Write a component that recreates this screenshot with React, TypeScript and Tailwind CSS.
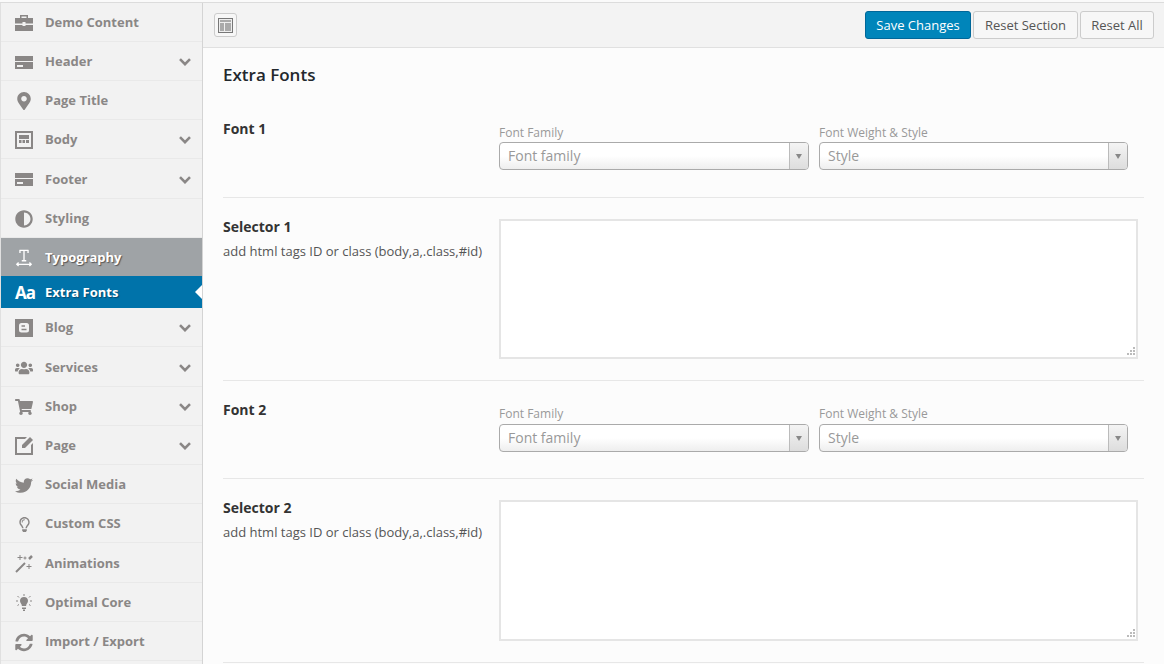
import { FaMapMarkerAlt, FaAdjust, FaUsers, FaShoppingCart, FaTwitter, FaRegLightbulb, FaSyncAlt } from "react-icons/fa";
import type { ReactNode } from "react";

const BriefcaseIcon = () => (
  <svg viewBox="0 0 18 16" className="h-[16px] w-[18px]">
    <path fill="#8a8786" d="M5 0h8v3h-1.500V1.500h-5V3H5zM0 3h18v5.500h-7.500V7h-3v1.500H0zM0 10h7.500v1h3v-1H18v6H0z" />
  </svg>
);

const HeaderIcon = () => (
  <svg viewBox="0 0 18 13" className="h-[13px] w-[18px]">
    <path fill="#8a8786" d="M0 0h18v5H0zM0 6h18v7H0z" />
    <path fill="#f2f2f2" d="M2 9h6v2H2z" />
  </svg>
);

const BodyIcon = () => (
  <svg viewBox="0 0 18 18" className="h-[18px] w-[18px]">
    <path fill="#8a8786" d="M0 0h18v18H0z" />
    <path fill="#f2f2f2" d="M2 2h14v14H2z" />
    <path fill="#8a8786" d="M4 4h10v4H4zM4 9h2.500v3H4zM7.500 9H10v3H7.500zM11 9h3v3h-3z" />
  </svg>
);

const TypoIcon = () => (
  <svg viewBox="0 0 20 20" className="h-[20px] w-[20px]" fill="none" stroke="#fff">
    <path strokeWidth="1.500" d="M5 1.500h10M5.500 1v3.500M14.500 1v3.500M10 1.500V13M7.500 13h5" />
    <path strokeWidth="1.500" d="M2 17h16M4 15l-2 2 2 2M16 15l2 2-2 2" />
  </svg>
);

const BloggerIcon = () => (
  <svg viewBox="0 0 18 18" className="h-[18px] w-[18px]">
    <path fill="#8a8786" d="M0 0h18v18H0z" />
    <rect x="4" y="4" width="10" height="9.500" rx="2.500" fill="#f2f2f2" />
    <path fill="#8a8786" d="M6.500 6.200h3.500v1.500H6.500zM6.500 9.800h5v1.500h-5z" />
  </svg>
);

const PageIcon = () => (
  <svg viewBox="0 0 18 18" className="h-[18px] w-[18px]">
    <path fill="#8a8786" d="M0 0h12l-2 2H2v14h14V8l2-2v12H0z" />
    <path fill="#8a8786" d="M15 0l3 3-8 8H7V8z" />
  </svg>
);

const WandIcon = () => (
  <svg viewBox="0 0 18 18" className="h-[18px] w-[18px]" fill="none" stroke="#8a8786">
    <path strokeWidth="2" d="M1 17L10 8" />
    <path strokeWidth="2.500" d="M14 4l3-3" />
    <path strokeWidth="1" d="M5 0v5M2.500 2.500h5M10 1.500v3M8.500 3h3M14 9v5M11.500 11.500h5" />
  </svg>
);

const CoreIcon = () => (
  <svg viewBox="0 0 18 18" className="h-[18px] w-[18px]" fill="none" stroke="#8a8786">
    <path fill="#8a8786" stroke="none" d="M9 3c2.500 0 4 1.700 4 3.700 0 1.700-1.200 2.600-1.800 4.300v1H6.800v-1C6.200 9.300 5 8.400 5 6.700 5 4.700 6.500 3 9 3zM7 13.500h4V15H7zM8 15.500h2V17H8z" />
    <path d="M9 0v2M2.500 2l1.500 1.500M15.500 2L14 3.500M1 7h2M15 7h2M2.500 11.500L4 10.500M15.500 11.500L14 10.500" />
  </svg>
);

const Chevron = () => (
  <svg viewBox="0 0 12 8" className="h-[8px] w-[12px]" fill="none" stroke="#8a8786" strokeWidth="2.600">
    <path d="M1 1.200l5 5 5-5" />
  </svg>
);

type Item = { label: string; icon: ReactNode; arrow?: boolean; h: string };

const itemsTop: Item[] = [
  { label: "Demo Content", icon: <BriefcaseIcon />, h: "h-[39px]" },
  { label: "Header", icon: <HeaderIcon />, arrow: true, h: "h-[39px]" },
  { label: "Page Title", icon: <FaMapMarkerAlt size={18} />, h: "h-[39px]" },
  { label: "Body", icon: <BodyIcon />, arrow: true, h: "h-[39px]" },
  { label: "Footer", icon: <HeaderIcon />, arrow: true, h: "h-[40px]" },
  { label: "Styling", icon: <FaAdjust size={18} />, h: "h-[39px]" },
];

const itemsBottom: Item[] = [
  { label: "Blog", icon: <BloggerIcon />, arrow: true, h: "h-[39px]" },
  { label: "Services", icon: <FaUsers size={18} />, arrow: true, h: "h-[40px]" },
  { label: "Shop", icon: <FaShoppingCart size={18} />, arrow: true, h: "h-[39px]" },
  { label: "Page", icon: <PageIcon />, arrow: true, h: "h-[39px]" },
  { label: "Social Media", icon: <FaTwitter size={19} />, h: "h-[39px]" },
  { label: "Custom CSS", icon: <FaRegLightbulb size={15} />, h: "h-[39px]" },
  { label: "Animations", icon: <WandIcon />, h: "h-[40px]" },
  { label: "Optimal Core", icon: <CoreIcon />, h: "h-[39px]" },
  { label: "Import / Export", icon: <FaSyncAlt size={19} />, h: "h-[39px]" },
];

const MenuRow = ({ item }: { item: Item }) => (
  <div className={`flex items-center border-b border-[#e9e9e9] pt-[2px] pl-[14px] pr-[11px] text-[#8a8786] ${item.h}`}>
    <span className="flex w-[18px] shrink-0 justify-center">{item.icon}</span>
    <span className="ml-[12px] flex-1 text-[13px] font-bold">{item.label}</span>
    {item.arrow && <Chevron />}
  </div>
);

const Select = ({ label, placeholder, w, labelH }: { label: string; placeholder: string; w: string; labelH: string }) => (
  <div className={w}>
    <div className={`text-[12px] leading-[18px] text-[#999] ${labelH}`}>{label}</div>
    <div className="flex h-[28px] items-stretch overflow-hidden rounded-[4px] border border-[#aaa] bg-gradient-to-b from-white from-50% to-[#eee]">
      <span className="flex-1 pl-[8px] text-[14px] leading-[26px] text-[#999]">{placeholder}</span>
      <span className="flex w-[19px] items-center justify-center border-l border-[#bbb] bg-gradient-to-b from-[#f4f4f4] to-[#ddd]">
        <span className="mt-[1px] h-0 w-0 border-x-[3.5px] border-t-[5px] border-x-transparent border-t-[#888]" />
      </span>
    </div>
  </div>
);

const FontRow = ({ title, labelH, gap }: { title: string; labelH: string; gap: string }) => (
  <div className="flex h-[98px] border-b border-[#e7e7e7] pt-[18px]">
    <div className="w-[276px] text-[14px] font-bold text-[#333]">{title}</div>
    <div className={`flex gap-[10px] ${gap}`}>
      <Select label="Font Family" placeholder="Font family" w="w-[310px]" labelH={labelH} />
      <Select label="Font Weight & Style" placeholder="Style" w="w-[309px]" labelH={labelH} />
    </div>
  </div>
);

const SelectorRow = ({ title, h, box }: { title: string; h: string; box: string }) => (
  <div className={`flex border-b border-[#e7e7e7] pt-[21px] ${h}`}>
    <div className="w-[276px]">
      <div className="-mt-[2px] text-[14px] font-bold leading-[19px] text-[#333]">{title}</div>
      <div className="mt-[6px] text-[13px] leading-[18px] text-[#555]">add html tags ID or class (body,a,.class,#id)</div>
    </div>
    <div className={`relative w-[639px] border-2 border-[#e5e5e5] bg-white ${box}`}>
      <svg viewBox="0 0 9 9" className="absolute bottom-[1px] right-[1px] h-[9px] w-[9px]" fill="#bbb">
        <path d="M7 0h2v2H7zM4 3h2v2H4zM7 3h2v2H7zM1 6h2v2H1zM4 6h2v2H4zM7 6h2v2H7z" />
      </svg>
    </div>
  </div>
);

export default function App() {
  return (
    <div className="flex h-[664px] w-[1164px] flex-col overflow-hidden bg-white font-['Open_Sans',sans-serif]">
      <div className="h-[2px] shrink-0 bg-[#fafafa]" />
      <div className="flex min-h-0 flex-1 border-t border-[#dcdcdc]">
        {/* Sidebar */}
        <div className="w-[203px] shrink-0 border-x border-[#e0e0e0] border-r-[#d4d4d4] bg-[#f2f2f2]">
          {itemsTop.map((item) => (
            <MenuRow key={item.label} item={item} />
          ))}
          <div className="flex h-[38px] items-center bg-[#9fa3a6] pt-[2px] pl-[14px] text-white">
            <span className="flex w-[18px] justify-center"><TypoIcon /></span>
            <span className="ml-[12px] text-[13px] font-bold [text-shadow:1px_1px_1px_#555]">Typography</span>
          </div>
          <div className="relative flex h-[32px] items-center bg-[#0073aa] pt-[1px] pl-[14px] text-white">
            <span className="w-[18px] text-[17px] leading-none font-bold tracking-[-1px] whitespace-nowrap">Aa</span>
            <span className="ml-[12px] text-[13px] font-bold [text-shadow:1px_1px_1px_#004a70]">Extra Fonts</span>
            <span className="absolute right-0 top-[9px] h-0 w-0 border-y-[7px] border-r-[7px] border-y-transparent border-r-white" />
          </div>
          {itemsBottom.map((item) => (
            <MenuRow key={item.label} item={item} />
          ))}
        </div>

        {/* Main */}
        <div className="min-w-0 flex-1 bg-[#fcfcfc]">
          <div className="flex h-[45px] items-center border-b border-[#e0e0e0] bg-[#f3f3f3] pl-[11px] pr-[10px]">
            <div className="flex h-[24px] w-[23px] items-center justify-center rounded-[3px] border border-[#ccc] bg-[#f7f7f7]">
              <svg viewBox="0 0 15 15" className="h-[15px] w-[15px]">
                <path fill="#777" d="M0 0h15v15H0z" />
                <path fill="#eee" d="M1 1h13v13H1z" />
                <path fill="#aaa" d="M2 2h11v2H2zM2 5h4v8H2zM7 5h6v8H7z" />
              </svg>
            </div>
            <div className="ml-auto flex gap-[2px] text-[13px]">
              <button className="h-[28px] w-[106px] rounded-[3px] border border-[#006799] bg-[#0085ba] pt-[2px] text-white">Save Changes</button>
              <button className="h-[28px] w-[105px] rounded-[3px] border border-[#ccc] bg-[#f7f7f7] pt-[2px] text-[#555]">Reset Section</button>
              <button className="h-[28px] w-[74px] rounded-[3px] border border-[#ccc] bg-[#f7f7f7] pt-[2px] text-[#555]">Reset All</button>
            </div>
          </div>
          <div className="pl-[20px] pr-[20px]">
            <h2 className="pt-[16px] text-[17px] leading-[22px] font-semibold text-[#23282d]">Extra Fonts</h2>
            <div className="mt-[14px]">
              <FontRow title="Font 1" labelH="h-[18px]" gap="pt-[6px]" />
              <SelectorRow title="Selector 1" h="h-[183px]" box="h-[140px]" />
              <FontRow title="Font 2" labelH="h-[19px]" gap="pt-[6px]" />
              <SelectorRow title="Selector 2" h="h-[184px]" box="h-[141px]" />
            </div>
          </div>
        </div>
      </div>
    </div>
  );
}
